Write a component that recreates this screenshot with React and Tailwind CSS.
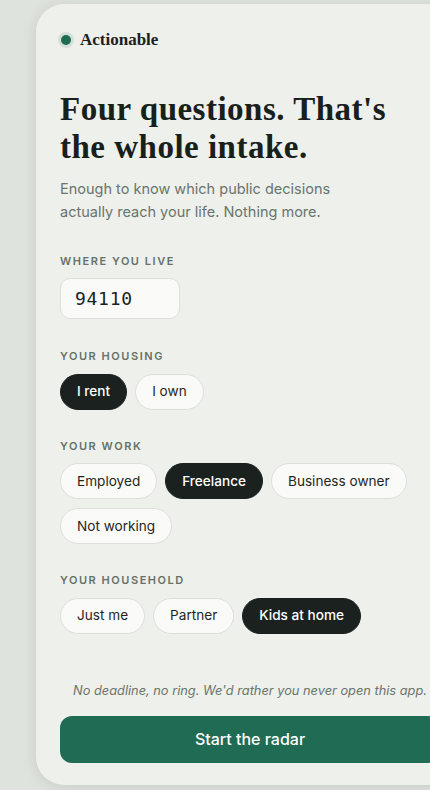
import { useState } from "react";

const sans = { fontFamily: "Inter, 'Noto Sans', sans-serif" };
const serif = { fontFamily: "'Liberation Serif', 'DejaVu Serif', serif" };

function Label({ children }) {
  return (
    <p className="mb-[9px] text-[11px] font-semibold uppercase tracking-[0.14em] text-[#66716a]">
      {children}
    </p>
  );
}

function Chip({ active, children, onClick }) {
  return (
    <button
      onClick={onClick}
      className={
        active
          ? "h-9 rounded-full border border-[#1a211e] bg-[#1a211e] px-[16px] text-[13.6px] font-medium text-white"
          : "h-9 rounded-full border border-[#dcdfda] bg-[#fafaf8] px-[16px] text-[13.6px] text-[#1f2622]"
      }
    >
      {children}
    </button>
  );
}

export default function App() {
  const [housing, setHousing] = useState("I rent");
  const [work, setWork] = useState("Freelance");
  const [household, setHousehold] = useState("Kids at home");

  return (
    <div
      className="h-[790px] w-[430px] overflow-hidden bg-[#dfe3de] pl-[36px] pt-[4px]"
      style={sans}
    >
      <div className="h-[781px] w-[428px] rounded-[28px] bg-[#eef0eb] px-6 pt-[23px] shadow-[0_2px_14px_rgba(30,45,38,0.12)]">
        <div className="flex items-center gap-[9px]">
          <span className="ml-[1px] h-[10px] w-[10px] rounded-full bg-[#1f6b53] shadow-[0_0_0_3px_rgba(31,107,83,0.12)]" />
          <span className="text-[17px] font-bold text-[#1b221e]" style={serif}>
            Actionable
          </span>
        </div>

        <h1
          className="mt-[37px] text-[33px] font-bold leading-[38px] tracking-[0.015em] text-[#18201c]"
          style={serif}
        >
          Four questions. That's
          <br />
          the whole intake.
        </h1>
        <p className="mt-[11px] text-[14.5px] leading-[23px] text-[#6a746e]">
          Enough to know which public decisions
          <br />
          actually reach your life. Nothing more.
        </p>

        <div className="mt-[30px]">
          <Label>Where you live</Label>
          <div
            className="flex h-[41px] w-[120px] items-center rounded-[10px] border border-[#dcdfda] bg-[#fafaf8] px-[14px] text-[18px] tracking-[0.04em] text-[#1a211e]"
            style={{ fontFamily: "'DejaVu Sans Mono', monospace" }}
          >
            94110
          </div>
        </div>

        <div className="mt-[29px]">
          <Label>Your housing</Label>
          <div className="flex flex-wrap gap-2">
            {["I rent", "I own"].map((o) => (
              <Chip key={o} active={housing === o} onClick={() => setHousing(o)}>
                {o}
              </Chip>
            ))}
          </div>
        </div>

        <div className="mt-[28px]">
          <Label>Your work</Label>
          <div className="flex flex-wrap gap-x-2 gap-y-[9px]">
            {["Employed", "Freelance", "Business owner", "Not working"].map((o) => (
              <Chip key={o} active={work === o} onClick={() => setWork(o)}>
                {o}
              </Chip>
            ))}
          </div>
        </div>

        <div className="mt-[28px]">
          <Label>Your household</Label>
          <div className="flex flex-wrap gap-2">
            {["Just me", "Partner", "Kids at home"].map((o) => (
              <Chip key={o} active={household === o} onClick={() => setHousehold(o)}>
                {o}
              </Chip>
            ))}
          </div>
        </div>

        <p className="mt-[47px] text-center text-[12.8px] italic text-[#6a746e]">
          No deadline, no ring. We'd rather you never open this app.
        </p>
        <button className="mt-[16px] h-[47px] w-full rounded-[12px] bg-[#1f6b53] text-[16px] font-medium text-white">
          Start the radar
        </button>
      </div>
    </div>
  );
}
